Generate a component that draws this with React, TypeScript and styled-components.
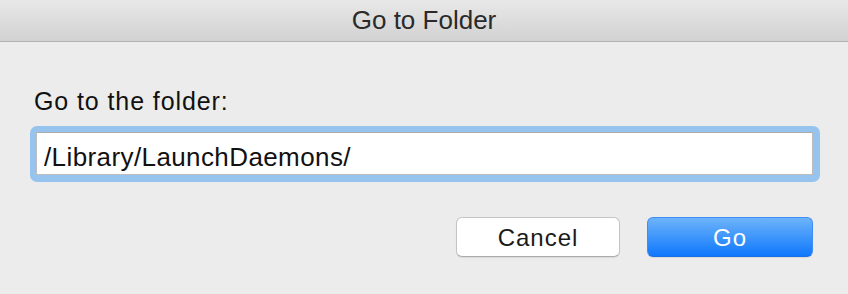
import React from "react";
import styled, { createGlobalStyle } from "styled-components";

const GlobalStyle = createGlobalStyle`
  html, body {
    margin: 0;
    padding: 0;
    background: #ececec;
    font-family: "Liberation Sans", Arial, sans-serif;
  }
  * { box-sizing: border-box; }
`;

const Dialog = styled.div`
  width: 848px;
  height: 294px;
  background: #ececec;
  display: flex;
  flex-direction: column;
`;

const TitleBar = styled.div`
  height: 42px;
  line-height: 41px;
  border-bottom: 1px solid #b3b3b3;
  background: linear-gradient(#e8e8e8, #d2d2d2);
  text-align: center;
  font-size: 26px;
  color: #2a2a2a;
`;

const Body = styled.div`
  padding: 47px 28px 0 30px;
  display: flex;
  flex-direction: column;
`;

const Label = styled.label`
  margin-left: 4px;
  font-size: 25px;
  line-height: 24px;
  letter-spacing: 0.9px;
  color: #111;
`;

const FocusRing = styled.div`
  margin-top: 13px;
  padding: 6px 7px 7px 6px;
  background: #97c4ef;
  border-radius: 7px;
`;

const Field = styled.input`
  display: block;
  width: 100%;
  height: 43px;
  margin: 0;
  border: 1px solid #bdbdbd;
  border-top-color: #acacac;
  background: #fff;
  padding: 7px 7px 0;
  font-family: "Liberation Sans", Arial, sans-serif;
  font-size: 26px;
  letter-spacing: 0.4px;
  color: #111;
  outline: none;
`;

const ButtonRow = styled.div`
  margin-top: 35px;
  padding-right: 7px;
  display: flex;
  justify-content: flex-end;
  gap: 27px;
`;

const Button = styled.button<{ $primary?: boolean; $width: number }>`
  width: ${(p) => p.$width}px;
  height: 40px;
  margin: 0;
  padding: 0;
  border-radius: 6px;
  font-family: "Liberation Sans", Arial, sans-serif;
  font-size: 24px;
  line-height: 37px;
  letter-spacing: 1px;
  text-align: center;
  cursor: default;
  color: ${(p) => (p.$primary ? "#ffffff" : "#1a1a1a")};
  border: 1px solid ${(p) => (p.$primary ? "#3f8ef5" : "#c4c4c4")};
  border-bottom-color: ${(p) => (p.$primary ? "#1a6fe6" : "#acacac")};
  background: ${(p) =>
    p.$primary ? "linear-gradient(#6db3fa, #0f78fc)" : "#ffffff"};
  box-shadow: 0 1px 1px rgba(0, 0, 0, 0.08);
`;

export default function App() {
  return (
    <>
      <GlobalStyle />
      <Dialog>
        <TitleBar>Go to Folder</TitleBar>
        <Body>
          <Label htmlFor="folder">Go to the folder:</Label>
          <FocusRing>
            <Field id="folder" readOnly value="/Library/LaunchDaemons/" />
          </FocusRing>
          <ButtonRow>
            <Button $width={164}>Cancel</Button>
            <Button $primary $width={166}>
              Go
            </Button>
          </ButtonRow>
        </Body>
      </Dialog>
    </>
  );
}
